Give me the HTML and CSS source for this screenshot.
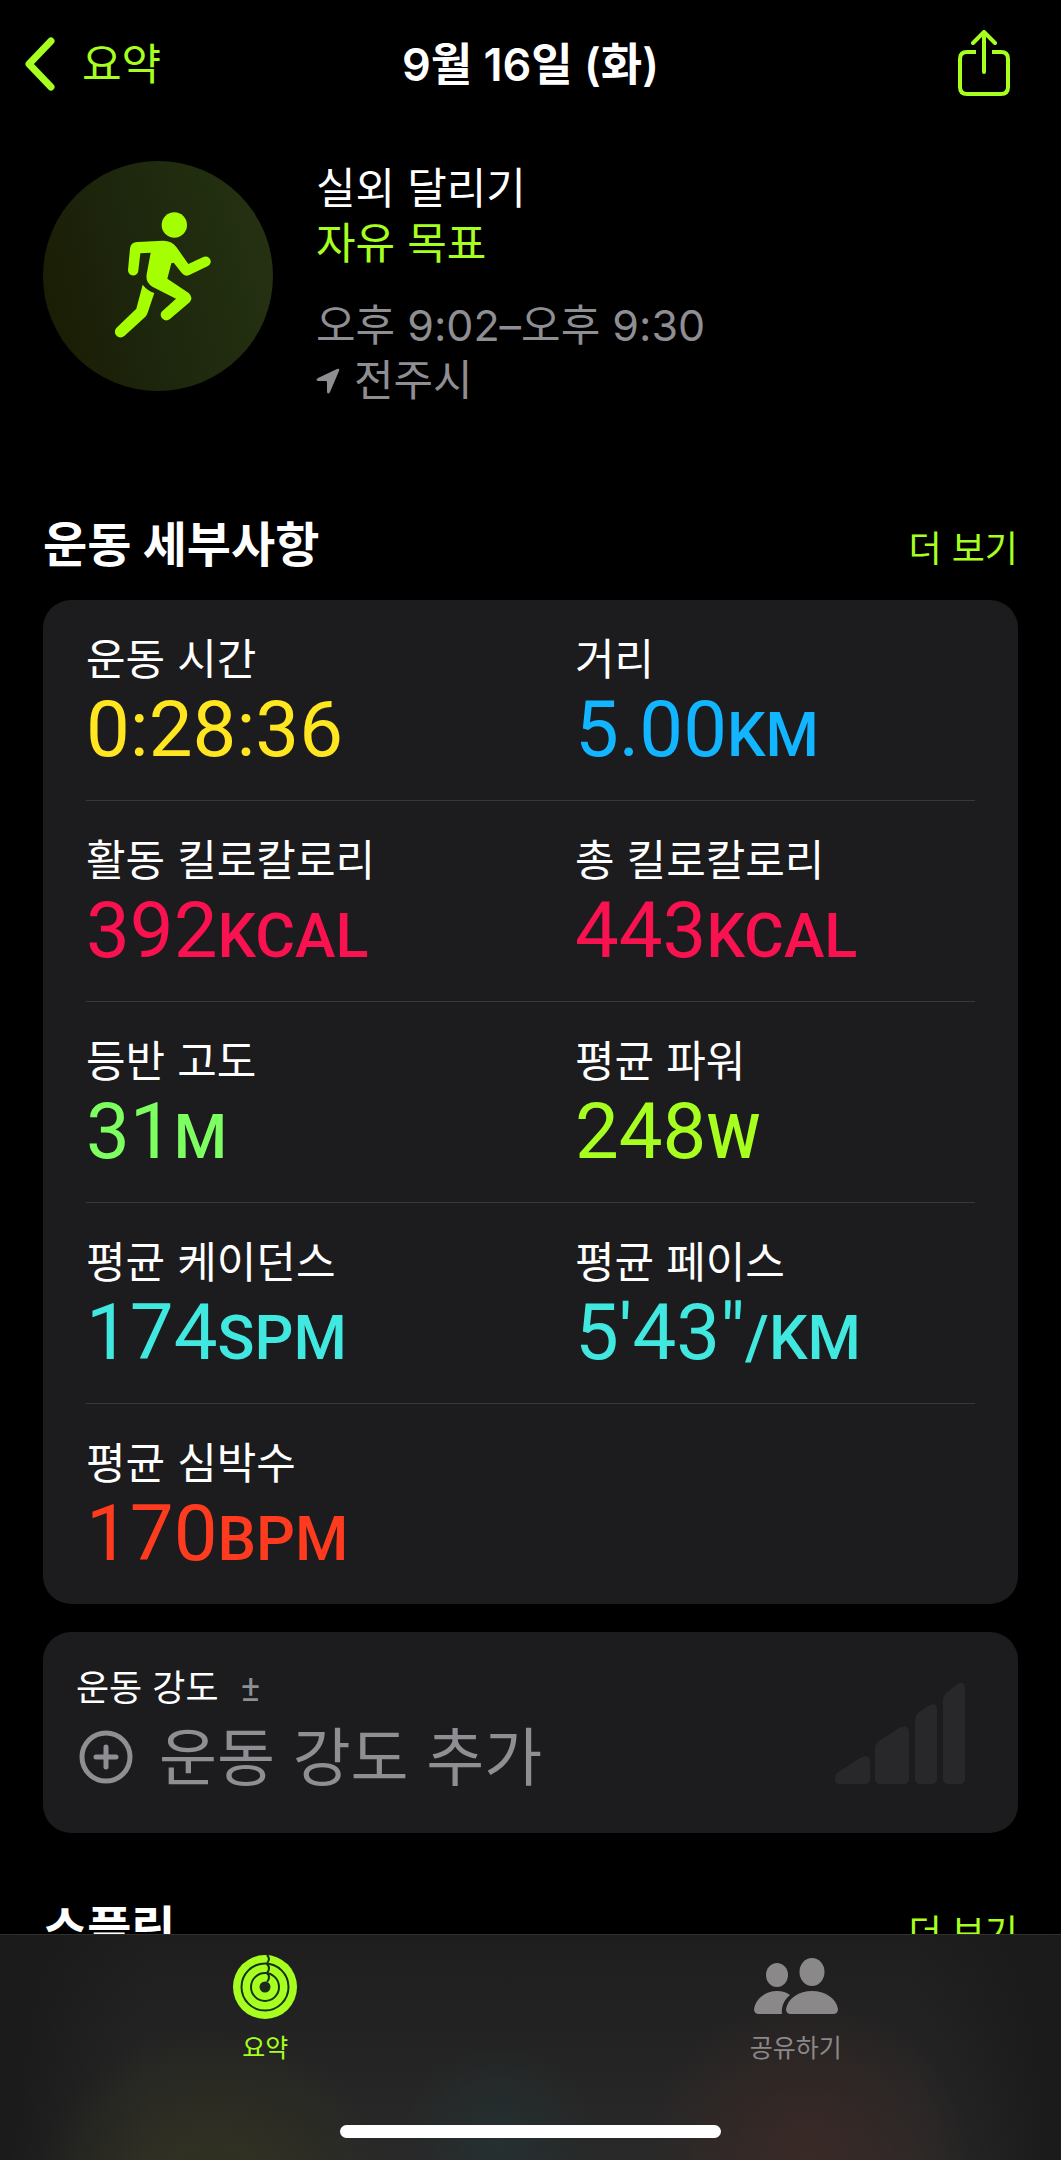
FILE: index.html
```html
<!DOCTYPE html>
<html lang="ko">
<head>
    <meta charset="UTF-8">
    <meta name="viewport" content="width=device-width, initial-scale=1.0">
    <title>9월 16일 (화)</title>
    <link rel="stylesheet" href="styles.css">
</head>
<body>
    <header class="navbar">
        <a class="back" href="#">
            <svg width="32" height="54" viewBox="0 0 32 54" fill="none" stroke="currentColor" stroke-width="7" stroke-linecap="round" stroke-linejoin="round" aria-hidden="true">
                <path d="M27 4 L5 27 L27 50"/>
            </svg>
            <span>요약</span>
        </a>
        <h1>9월 16일 (화)</h1>
        <button class="share" type="button" aria-label="공유">
            <svg width="54" height="68" viewBox="0 0 54 68" fill="none" stroke="currentColor" stroke-width="4" stroke-linecap="round" stroke-linejoin="round" aria-hidden="true">
                <path stroke-linecap="butt" d="M19 22 H10 Q3 22 3 29 V57 Q3 64 10 64 H44 Q51 64 51 57 V29 Q51 22 44 22 H35"/>
                <path d="M27 42 V4 M16 13 L27 2 L38 13"/>
            </svg>
        </button>
    </header>

    <main>
        <section class="summary">
            <div class="badge">
                <svg viewBox="-51 -27 690 690" aria-hidden="true">
                    <circle cx="343" cy="165" r="38"/>
                    <path d="M232 216 L310 212 Q334 212 349 231 L385 282 L430 261 A15 15 0 0 1 444 288 L388 315 Q375 321 366 310 L341 278 L334 280 L322 326 L386 369 Q401 382 389 397 L329 448 A17 17 0 0 1 305 425 L348 386 L277 350 Q256 337 260 313 L272 248 L241 250 L235 302 A15 15 0 0 1 204 300 L210 236 Q212 217 232 216 Z"/>
                    <path d="M248 344 Q262 362 283 369 L263 428 Q260 437 253 443 L193 498 A17 17 0 0 1 169 474 L229 416 Z"/>
                </svg>
            </div>
            <div class="summary-text">
                <p>실외 달리기</p>
                <p class="goal">자유 목표</p>
                <p class="time">오후 9:02–오후 9:30</p>
                <p class="place">
                    <svg width="24" height="26" viewBox="0 0 24 26" fill="currentColor" aria-hidden="true">
                        <path d="M21 1 Q24 0 23 3 L14 24 Q12 27 11 24 V14 Q11 13 10 13 H2 Q-1 12 2 10 Z"/>
                    </svg>
                    <span>전주시</span>
                </p>
            </div>
        </section>

        <section>
            <div class="section-head">
                <h2>운동 세부사항</h2>
                <a href="#">더 보기</a>
            </div>
            <div class="card metrics">
                <div class="row">
                    <div class="metric">
                        <p class="label">운동 시간</p>
                        <p class="value yellow">0:28:36</p>
                    </div>
                    <div class="metric">
                        <p class="label">거리</p>
                        <p class="value blue">5.00<span class="unit">KM</span></p>
                    </div>
                </div>
                <div class="row">
                    <div class="metric">
                        <p class="label">활동 킬로칼로리</p>
                        <p class="value pink">392<span class="unit">KCAL</span></p>
                    </div>
                    <div class="metric">
                        <p class="label">총 킬로칼로리</p>
                        <p class="value pink">443<span class="unit">KCAL</span></p>
                    </div>
                </div>
                <div class="row">
                    <div class="metric">
                        <p class="label">등반 고도</p>
                        <p class="value green">31<span class="unit">M</span></p>
                    </div>
                    <div class="metric">
                        <p class="label">평균 파워</p>
                        <p class="value lime">248<span class="unit">W</span></p>
                    </div>
                </div>
                <div class="row">
                    <div class="metric">
                        <p class="label">평균 케이던스</p>
                        <p class="value cyan">174<span class="unit">SPM</span></p>
                    </div>
                    <div class="metric">
                        <p class="label">평균 페이스</p>
                        <p class="value cyan">5'43"<span class="unit">/KM</span></p>
                    </div>
                </div>
                <div class="row">
                    <div class="metric">
                        <p class="label">평균 심박수</p>
                        <p class="value red">170<span class="unit">BPM</span></p>
                    </div>
                </div>
            </div>

            <div class="card effort">
                <div>
                    <p class="effort-label">운동 강도 <span class="sign">±</span></p>
                    <button class="effort-add" type="button">
                        <svg width="54" height="54" viewBox="0 0 54 54" fill="none" stroke="currentColor" stroke-width="5" stroke-linecap="round" aria-hidden="true">
                            <circle cx="27" cy="27" r="24"/>
                            <path d="M27 17 V37 M17 27 H37"/>
                        </svg>
                        <span>운동 강도 추가</span>
                    </button>
                </div>
                <svg class="bars" width="130" height="102" viewBox="0 0 130 102" aria-hidden="true">
                    <path d="M2 91 L25 76 Q35 71 35 80 V97 Q35 102 30 102 H5 Q0 102 0 97 Q0 93 2 91 Z"/>
                    <path d="M40 68 Q40 62 44 59 L64 46 Q74 41 74 51 V97 Q74 102 69 102 H45 Q40 102 40 97 Z"/>
                    <path d="M80 39 Q80 34 83 31 L93 24 Q102 19 102 28 V97 Q102 102 97 102 H85 Q80 102 80 97 Z"/>
                    <path d="M108 19 Q108 14 111 11 L121 3 Q130 -3 130 7 V97 Q130 102 125 102 H113 Q108 102 108 97 Z"/>
                </svg>
            </div>
        </section>

        <section>
            <div class="section-head">
                <h2>스플릿</h2>
                <a href="#">더 보기</a>
            </div>
        </section>
    </main>

    <nav class="tabbar">
        <div class="tabs">
            <a class="tab active" href="#">
                <svg width="64" height="64" viewBox="0 0 64 64" aria-hidden="true">
                    <circle cx="32" cy="32" r="32" fill="currentColor"/>
                    <g fill="none" stroke="#17301a" stroke-width="2">
                        <circle cx="32" cy="32" r="23.5"/>
                        <circle cx="32" cy="32" r="14"/>
                        <path d="M34 0 Q38 4 34 8 M34 9 Q38 13 34 18 M34 18 Q38 22 34 27"/>
                    </g>
                    <circle cx="32" cy="32" r="5.5" fill="#1c2a1c"/>
                </svg>
                <span>요약</span>
            </a>
            <a class="tab" href="#">
                <svg width="86" height="64" viewBox="0 0 86 64" fill="currentColor" aria-hidden="true">
                    <ellipse cx="24" cy="20" rx="11" ry="12"/>
                    <ellipse cx="59" cy="17" rx="12.5" ry="14"/>
                    <path d="M6 59 Q1 59 1 54 C3 43 13 36 24 36 Q32 36 37 40 C31 45 28 52 29 59 Z"/>
                    <path d="M38 59 Q33 59 33 54 C35 43 46 36 59 36 C72 36 83 43 85 54 Q85 59 80 59 Z"/>
                </svg>
                <span>공유하기</span>
            </a>
        </div>
        <div class="home-indicator"></div>
    </nav>
</body>
</html>
```
FILE: styles.css
```css
* {
    box-sizing: border-box;
}
body {
    font-family: Inter, "Noto Sans CJK KR", sans-serif;
    font-size: 43px;
    line-height: 55px;
    margin: 0;
    min-height: 100vh;
    background-color: #000;
    color: #fff;
}
h1, h2, p {
    margin: 0;
}
a {
    color: #a6ff1f;
    text-decoration: none;
}
button {
    font: inherit;
    padding: 0;
    border: none;
    background: none;
    cursor: pointer;
}
svg {
    display: block;
    flex: none;
}

/* Top bar */
.navbar {
    display: grid;
    grid-template-columns: 1fr auto 1fr;
    align-items: center;
    height: 128px;
    padding: 0 24px;
}
.back {
    display: flex;
    align-items: center;
    gap: 26px;
}
h1 {
    font-size: 45px;
    font-weight: 600;
}
.share {
    justify-self: end;
    margin-right: 26px;
    color: #a6ff1f;
}

main {
    padding: 33px 43px 0;
}

/* Workout summary */
.summary {
    display: flex;
    gap: 43px;
    margin-bottom: 104px;
}
.badge {
    width: 230px;
    height: 230px;
    flex: none;
    border-radius: 50%;
    background: linear-gradient(75deg, #1a1b03, #1d270d 45%, #263312);
    fill: #a6ff00;
}
.goal {
    color: #a6ff1f;
}
.time {
    margin-top: 27px;
}
.time, .place {
    color: #8e8e93;
}
.place {
    display: flex;
    align-items: center;
    gap: 14px;
}

.section-head {
    display: flex;
    justify-content: space-between;
    align-items: baseline;
    margin-bottom: 22px;
}
.section-head h2 {
    font-size: 48px;
    font-weight: 700;
    line-height: 66px;
}
.section-head a {
    font-size: 36px;
}

/* Cards */
.card {
    border-radius: 28px;
    background-color: #1c1c1e;
}
.metrics {
    padding: 0 43px;
    margin-bottom: 28px;
}
.row {
    display: grid;
    grid-template-columns: 55% 45%;
    padding: 31px 0 27px;
    border-bottom: 1px solid #38383a;
}
.row:last-child {
    border-bottom: none;
}
.label {
    line-height: 56px;
}
.value {
    font-family: Roboto, sans-serif;
    font-size: 78px;
    line-height: 86px;
}
.unit {
    font-size: 61px;
    font-weight: 500;
    line-height: 1;
}
.yellow { color: #ffe620; }
.blue { color: #12b5ff; }
.pink { color: #fa1150; }
.green { color: #7dff62; }
.lime { color: #a6ff1f; }
.cyan { color: #40e8e0; }
.red { color: #ff3b1f; }

.effort {
    display: flex;
    justify-content: space-between;
    align-items: center;
    padding: 32px 53px 32px 33px;
    margin-bottom: 63px;
}
.effort-label {
    font-size: 36px;
    line-height: 48px;
}
.sign {
    margin-left: 12px;
    font-family: Roboto, sans-serif;
    color: #8e8e93;
}
.effort-add {
    display: flex;
    align-items: center;
    gap: 26px;
    padding-left: 3px;
    font-size: 63px;
    line-height: 88px;
    color: #8e8e93;
}
.bars {
    fill: #28282a;
}

/* Bottom tab bar, lies over the scrolling content */
.tabbar {
    position: fixed;
    left: 0;
    right: 0;
    bottom: 0;
    padding: 20px 0 22px;
    border-top: 1px solid #303030;
    background:
        radial-gradient(circle at 76% 100%, #3a2926, transparent 20%),
        radial-gradient(circle at 47% 92%, #253031, transparent 16%),
        radial-gradient(circle at 20% 120%, #33331f, transparent 20%),
        linear-gradient(90deg, #1a1a1a, transparent 14%, transparent 86%, #1a1a1a),
        linear-gradient(#1e1e1e, #292929);
}
.tabs {
    display: flex;
    margin-bottom: 59px;
}
.tab {
    flex: 1;
    display: flex;
    flex-direction: column;
    align-items: center;
    gap: 11px;
    font-size: 25px;
    line-height: 36px;
    color: #8a8888;
}
.tab.active {
    color: #a6ff1f;
}
.home-indicator {
    width: 36%;
    height: 13px;
    margin: 0 auto;
    border-radius: 7px;
    background-color: #fff;
}
```
